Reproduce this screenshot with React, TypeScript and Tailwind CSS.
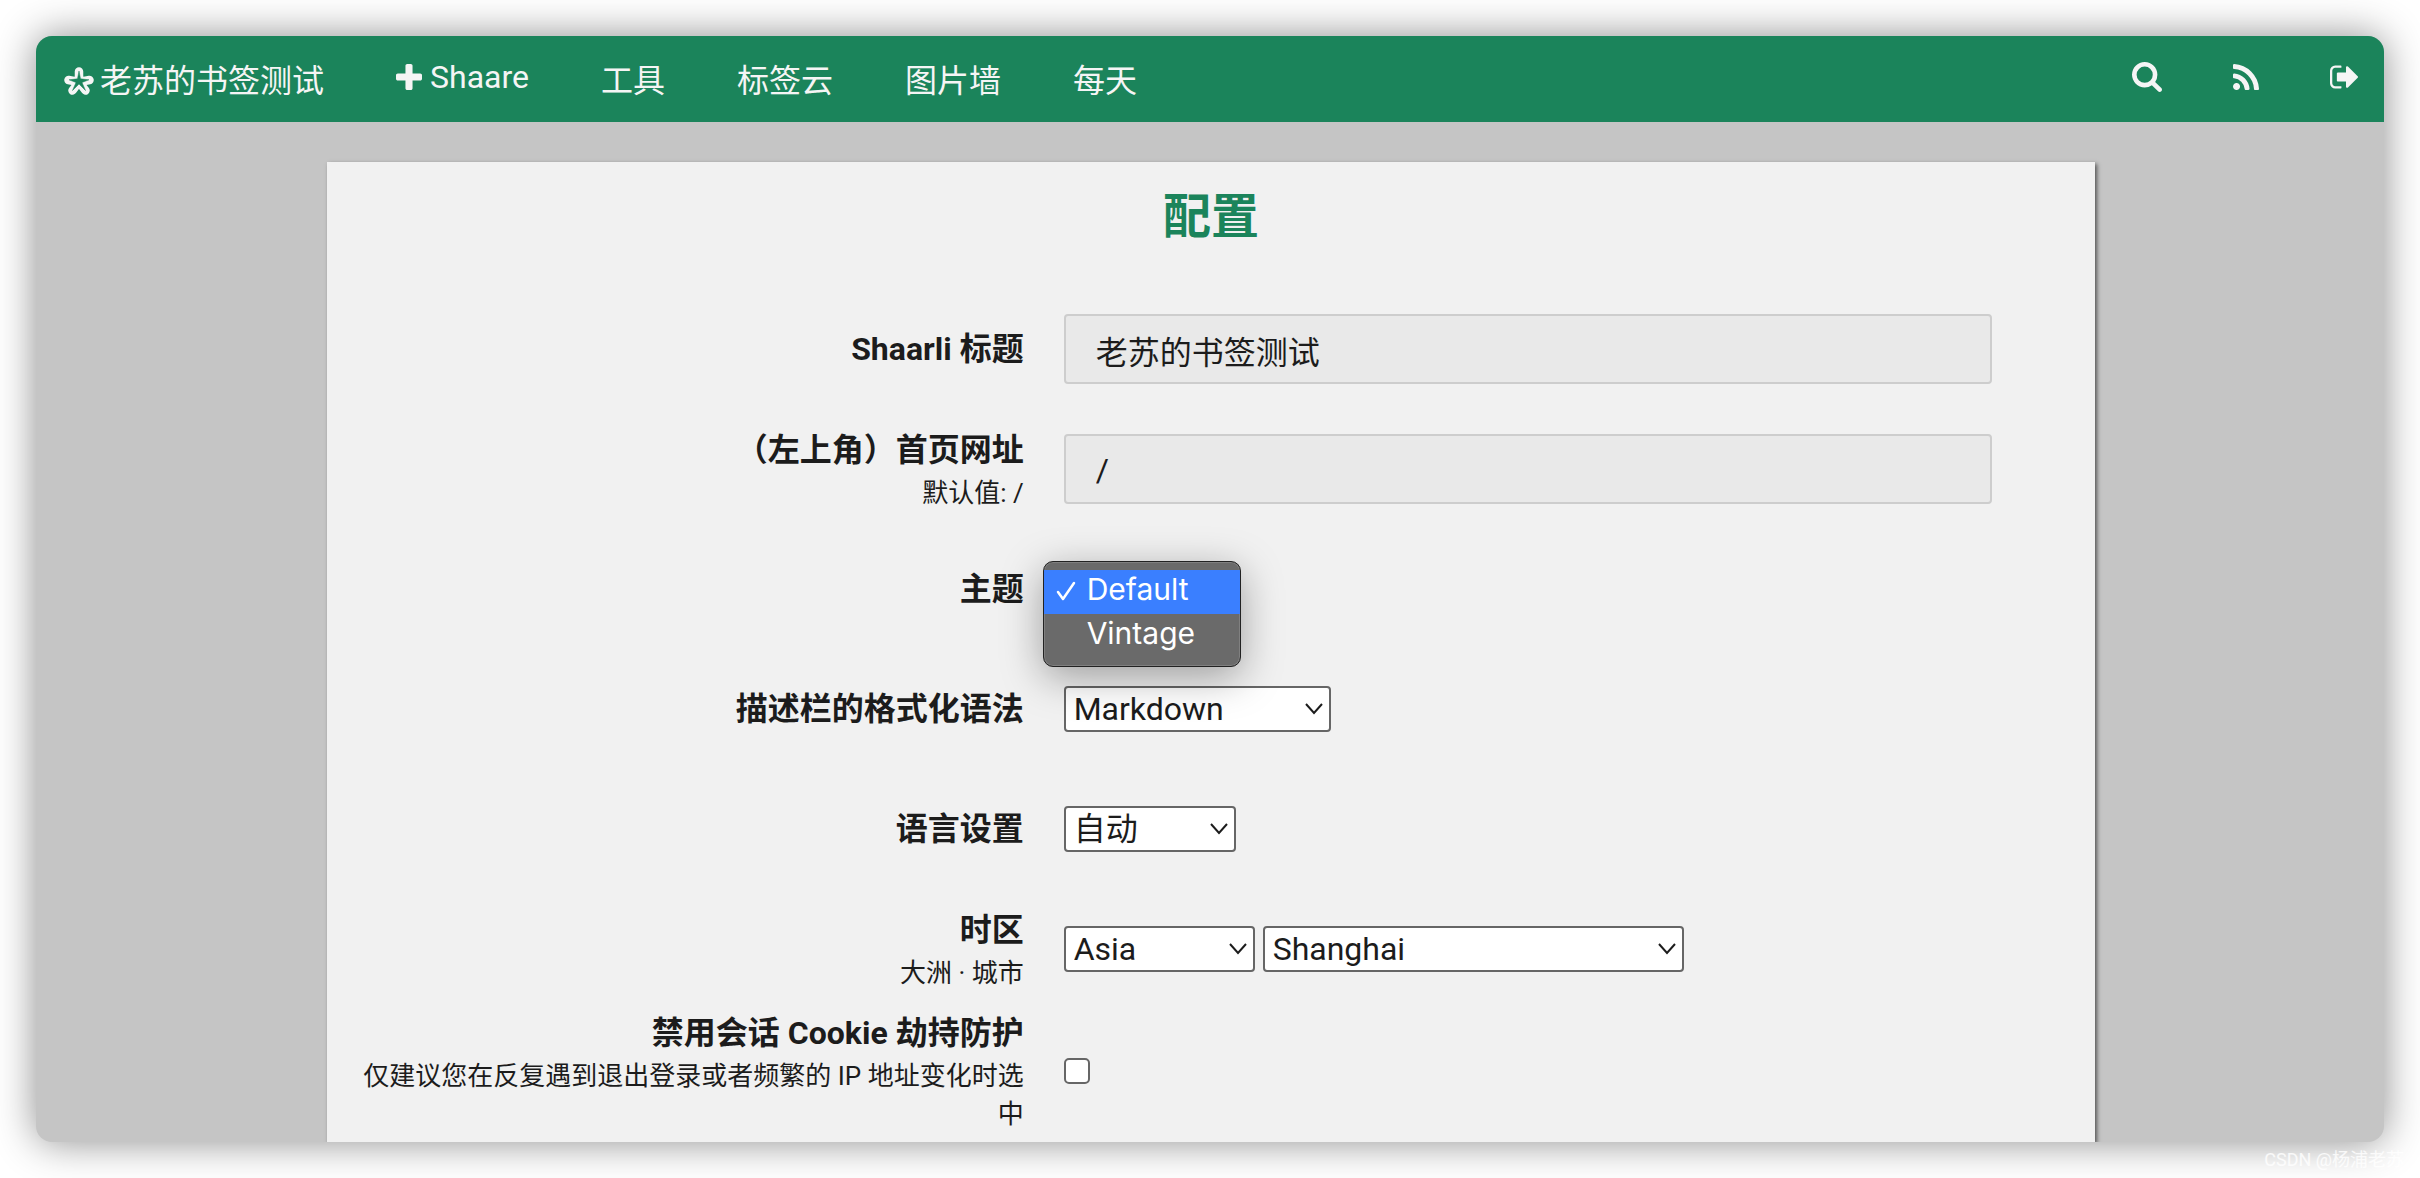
import { useState } from "react";
import type { ReactNode } from "react";
import clsx from "clsx";

const ICONS = {
  plus: "M1600 736v192q0 40-28 68t-68 28h-416v416q0 40-28 68t-68 28h-192q-40 0-68-28t-28-68v-416h-416q-40 0-68-28t-28-68v-192q0-40 28-68t68-28h416v-416q0-40 28-68t68-28h192q40 0 68 28t28 68v416h416q40 0 68 28t28 68z",
  search:
    "M1216 832q0-185-131.5-316.5t-316.5-131.5-316.5 131.5-131.5 316.5 131.5 316.5 316.5 131.5 316.5-131.5 131.5-316.5zm512 832q0 52-38 90t-90 38q-54 0-90-38l-343-342q-179 124-399 124-143 0-273.5-55.5t-225-150-150-225-55.5-273.5 55.5-273.5 150-225 225-150 273.5-55.5 273.5 55.5 225 150 150 225 55.5 273.5q0 220-124 399l343 343q37 37 37 90z",
  rss: "M576 1344q0 80-56 136t-136 56-136-56-56-136 56-136 136-56 136 56 56 136zm512 123q2 28-17 48-18 21-47 21h-135q-25 0-43-16.5t-20-41.5q-22-229-184.5-391.5t-391.5-184.5q-25-2-41.5-20t-16.5-43v-135q0-29 21-47 17-17 43-17h5q160 13 306 80.5t259 181.5q114 113 181.5 259t80.5 306zm512 2q2 27-18 47-18 20-46 20h-143q-26 0-44.5-17.5t-19.5-42.5q-12-215-101-408.5t-231.5-336-336-231.5-408.5-102q-25-1-42.5-19.5t-17.5-43.5v-143q0-28 20-46 18-18 44-18h3q262 13 501.5 120t425.5 294q187 186 294 425.5t120 501.5z",
  signOut:
    "M704 1440q0 4 1 20t.5 26.5-3 23.5-10 19.5-20.5 6.5h-320q-119 0-203.5-84.5t-84.5-203.5v-704q0-119 84.5-203.5t203.5-84.5h320q13 0 22.5 9.5t9.5 22.5q0 4 1 20t.5 26.5-3 23.5-10 19.5-20.5 6.5h-320q-66 0-113 47t-47 113v704q0 66 47 113t113 47h312l11.5 1 11.5 3 8 5.5 7 9 2 13.5zm928-544q0 26-19 45l-544 544q-19 19-45 19t-45-19-19-45v-288h-448q-26 0-45-19t-19-45v-384q0-26 19-45t45-19h448v-288q0-26 19-45t45-19 45 19l544 544q19 19 19 45z",
};

const Icon = ({ name, viewBox, className }: { name: keyof typeof ICONS; viewBox: string; className: string }) => (
  <svg viewBox={viewBox} fill="currentColor" className={className} aria-hidden="true">
    <path d={ICONS[name]} />
  </svg>
);

const Logo = () => (
  <svg viewBox="0 0 30 28" className="h-7 w-[30px]" aria-hidden="true">
    <path
      d="M15 15V4.500M15 15l10.500-2M15 15l6.500 8.500M15 15l-6.500 8.500M15 15L4.500 13"
      stroke="currentColor"
      strokeWidth="8.500"
      strokeLinecap="round"
      fill="none"
    />
    <path
      d="M15 4l1.500 7.800 8.500 1-7 2.700 3.500 8-6.500-6.500-6.500 6.500 3.500-8-7-2.700 8.500-1z"
      fill="#1b845b"
      stroke="#1b845b"
      strokeWidth="0.500"
      strokeLinejoin="round"
    />
  </svg>
);

const MENU = ["工具", "标签云", "图片墙", "每天"];

const Header = () => (
  <header className="flex h-[86px] items-center justify-between bg-[#1b845b] pr-[26px] pl-7 text-[32px] leading-[38px] text-[#f5f5f5]">
    <nav className="flex items-center gap-[72px]">
      <a href="#" className="flex items-center gap-[6px] pt-1">
        <Logo />
        老苏的书签测试
      </a>
      <a href="#" className="flex items-center gap-2 pb-1">
        <Icon name="plus" viewBox="192 128 1408 1408" className="size-[26px]" />
        Shaare
      </a>
      {MENU.map((item) => (
        <a key={item} href="#" className="pt-1">
          {item}
        </a>
      ))}
    </nav>
    <div className="flex items-center gap-[71px] pb-1">
      <a href="#" aria-label="Search">
        <Icon name="search" viewBox="64 128 1664 1664" className="size-[30px]" />
      </a>
      <a href="#" aria-label="RSS">
        <Icon name="rss" viewBox="192 128 1408 1408" className="size-[26px]" />
      </a>
      <a href="#" aria-label="Logout">
        <Icon name="signOut" viewBox="64 256 1568 1280" className="h-6 w-[28px]" />
      </a>
    </div>
  </header>
);

type RowProps = { id: string; label: string; hint?: string; children: ReactNode };

const Row = ({ id, label, hint, children }: RowProps) => (
  <div className="grid h-[120px] grid-cols-[5fr_7fr] items-center">
    <label htmlFor={id} className="pr-10 pl-8 text-right">
      <span className="block text-[32px] leading-[48px] font-bold">{label}</span>
      {hint && <span className="block text-[26px] leading-[38px]">{hint}</span>}
    </label>
    <div className="flex items-center gap-2">{children}</div>
  </div>
);

const TextInput = ({ id, initial }: { id: string; initial: string }) => {
  const [value, setValue] = useState(initial);
  return (
    <input
      id={id}
      type="text"
      value={value}
      onChange={(e) => setValue(e.target.value)}
      className="h-[70px] w-[90%] rounded-[4px] border-2 border-[#cdcdcd] bg-[#e9e9e9] px-[30px] pt-[2px] text-[32px] outline-none"
    />
  );
};

type SelectProps = { id: string; options: string[]; className: string; label?: string };

const Select = ({ id, options, className, label }: SelectProps) => (
  <div className={clsx("relative", className)}>
    <select
      id={id}
      aria-label={label}
      className="block h-[46px] w-full appearance-none rounded-[4px] border-2 border-[#666] bg-white pr-10 pl-2 text-[32px] leading-[42px]"
    >
      {options.map((option) => (
        <option key={option}>{option}</option>
      ))}
    </select>
    <svg viewBox="0 0 18 12" fill="none" stroke="currentColor" strokeWidth="2" className="pointer-events-none absolute top-[17px] right-2 h-3 w-[18px]">
      <path d="M1 1l8 9 8-9" />
    </svg>
  </div>
);

// Open drop-down of the theme field
const ThemeMenu = () => {
  const [theme, setTheme] = useState("Default");
  return (
    <div className="relative h-[46px] w-[180px]">
      <div
        id="theme"
        role="listbox"
        aria-label="主题"
        className="absolute -top-[5px] -left-[21px] z-10 w-[198px] overflow-hidden rounded-[10px] border border-[#222] bg-[#6a6a6a] py-2 shadow-[0_10px_40px_rgba(0,0,0,0.35)] ring-1 ring-[#808080] ring-inset"
      >
        {["Default", "Vintage"].map((name) => (
          <button
            key={name}
            type="button"
            role="option"
            aria-selected={theme === name}
            onClick={() => setTheme(name)}
            className={clsx(
              "flex h-11 w-full items-center gap-[11px] pb-[6px] pl-[12px] font-[Inter,sans-serif] text-[30px] leading-[38px] text-white",
              theme === name && "bg-[#3a7fff]"
            )}
          >
            <svg viewBox="0 0 20 20" fill="none" stroke="currentColor" strokeWidth="2.500" strokeLinecap="round" strokeLinejoin="round" className={clsx("mt-1 size-5", theme !== name && "invisible")}>
              <path d="M2 11l5 7L18 2" />
            </svg>
            {name}
          </button>
        ))}
      </div>
    </div>
  );
};

const App = () => {
  const [disabled, setDisabled] = useState(false);

  return (
    <div className="relative h-screen overflow-hidden bg-white p-9 font-[Roboto,'Noto_Sans_CJK_SC',sans-serif] text-[#1c1c1c]">
      <div className="flex h-full flex-col overflow-hidden rounded-2xl bg-[#c5c5c5] shadow-[0_0_40px_rgba(0,0,0,0.45)]">
        <Header />
        <main className="mt-10 mr-[289px] ml-[291px] grow bg-[#f1f1f1] shadow-[2px_2px_4px_#555]">
          <h2 className="pt-[25px] text-center text-[48px] leading-[60px] font-bold text-[#1b845b]">配置</h2>
          <form className="pt-[42px]">
            <Row id="title" label="Shaarli 标题">
              <TextInput id="title" initial="老苏的书签测试" />
            </Row>
            <Row id="titleLink" label="（左上角）首页网址" hint="默认值: /">
              <TextInput id="titleLink" initial="/" />
            </Row>
            <Row id="theme" label="主题">
              <ThemeMenu />
            </Row>
            <Row id="formatter" label="描述栏的格式化语法">
              <Select id="formatter" options={["Markdown"]} className="w-[267px]" />
            </Row>
            <Row id="language" label="语言设置">
              <Select id="language" options={["自动"]} className="w-[172px]" />
            </Row>
            <Row id="continent" label="时区" hint="大洲 · 城市">
              <Select id="continent" options={["Asia"]} className="w-[191px]" />
              <Select id="city" label="城市" options={["Shanghai"]} className="w-[421px]" />
            </Row>
            <Row
              id="session"
              label="禁用会话 Cookie 劫持防护"
              hint="仅建议您在反复遇到退出登录或者频繁的 IP 地址变化时选中"
            >
              <input
                id="session"
                type="checkbox"
                checked={disabled}
                onChange={(e) => setDisabled(e.target.checked)}
                className="size-[26px] appearance-none rounded-[5px] border-2 border-[#666] bg-white checked:bg-[#1b845b]"
              />
            </Row>
          </form>
        </main>
      </div>
      <span className="absolute right-4 bottom-1 text-[18px] leading-7 text-white/80">CSDN @杨浦老苏</span>
    </div>
  );
};

export default App;
